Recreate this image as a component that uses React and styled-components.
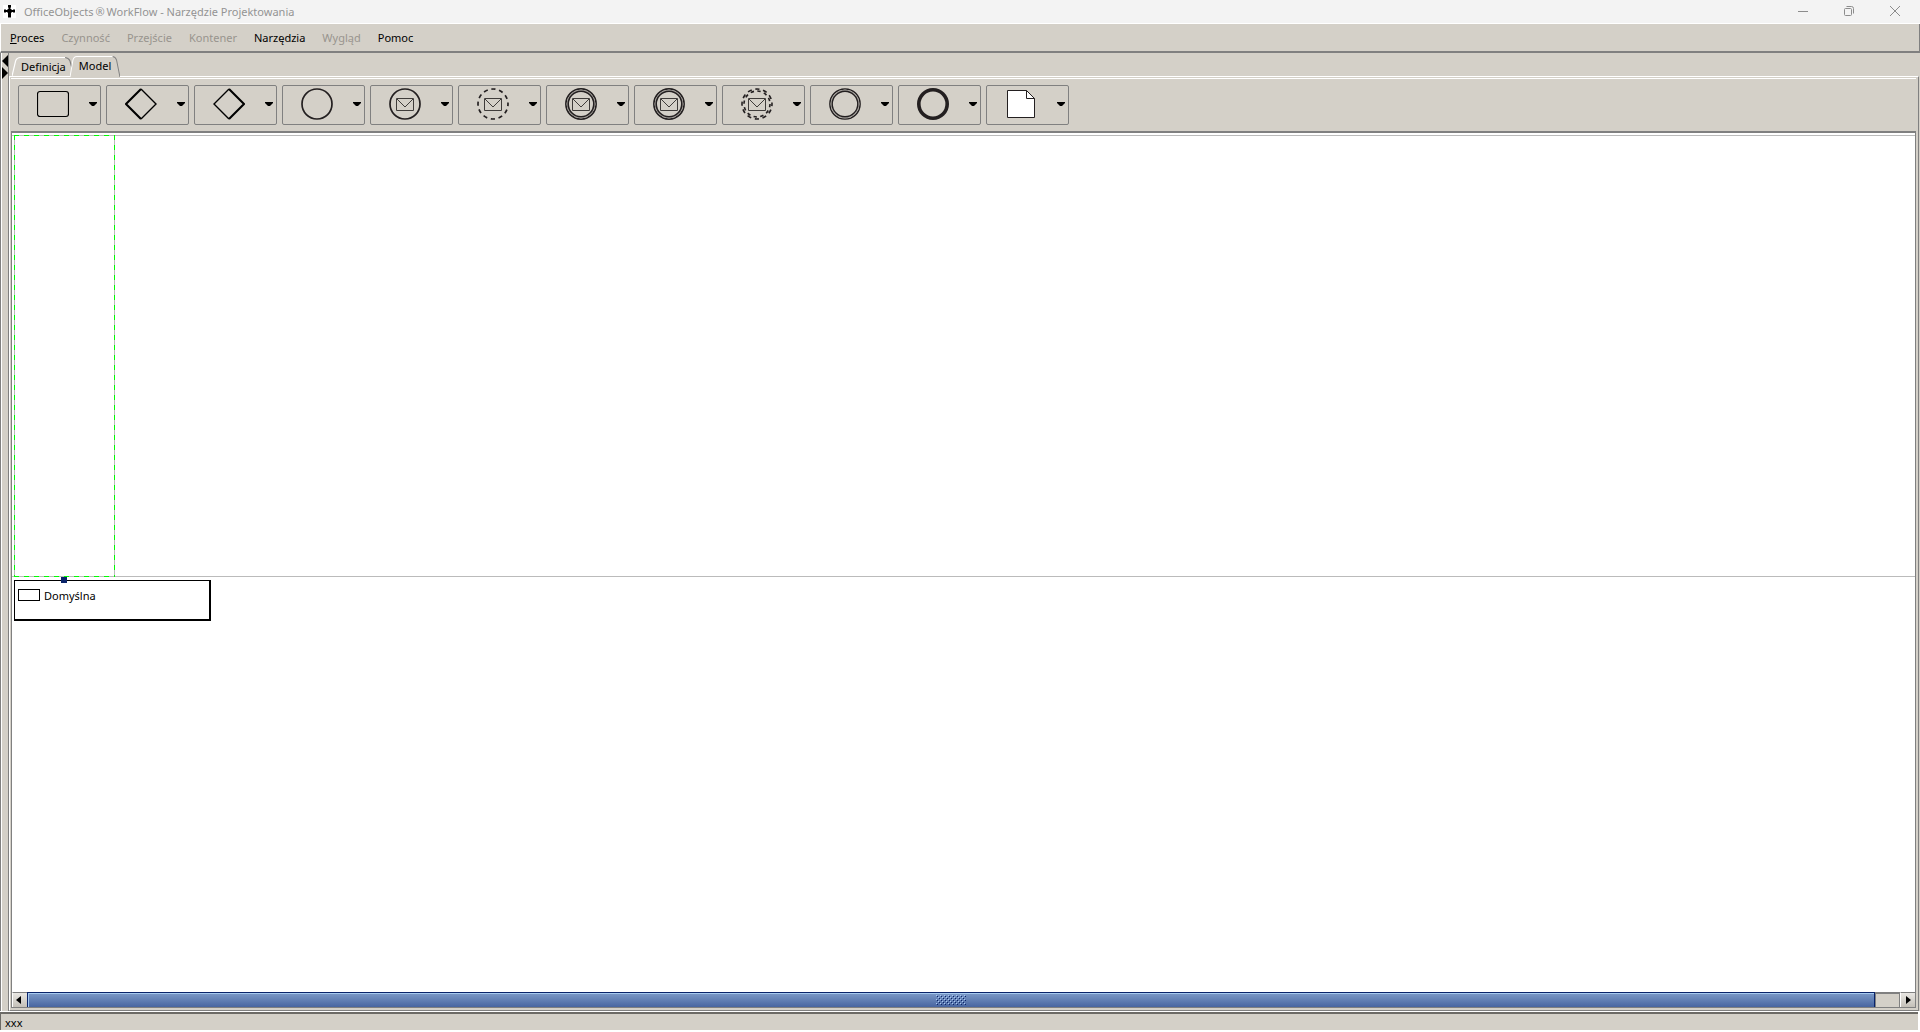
import { useState } from 'react'
import styled, { createGlobalStyle } from 'styled-components'

const INK = '#231f20'

const MENU = [
	{ label: 'Proces', mnemonic: true },
	{ label: 'Czynność', disabled: true },
	{ label: 'Przejście', disabled: true },
	{ label: 'Kontener', disabled: true },
	{ label: 'Narzędzia' },
	{ label: 'Wygląd', disabled: true },
	{ label: 'Pomoc' },
]

const GlobalStyle = createGlobalStyle`
	* {
		box-sizing: border-box;
	}
	html, body, #root {
		height: 100%;
	}
	body {
		margin: 0;
		background: #d4d0c8;
		font-family: 'Noto Sans', 'Open Sans', sans-serif;
		font-size: 11px;
		color: #000;
	}
	button {
		margin: 0;
		padding: 0;
		border: 0;
		background: none;
		font: inherit;
		color: inherit;
	}
	svg {
		display: block;
	}
`

const Window = styled.div`
	display: flex;
	flex-direction: column;
	height: 100vh;
	overflow: hidden;
`

const TitleBar = styled.header`
	display: flex;
	align-items: center;
	height: 24px;
	padding: 0 2px 1px 3px;
	background: #f3f3f3;
	border-bottom: 1px solid #fff;
`

const AppIcon = styled.svg`
	width: 13px;
	height: 13px;
	margin-right: 8px;
	background: #fff;
`

const Title = styled.h1`
	flex: 1;
	margin: 0;
	font-size: 11px;
	font-weight: 400;
	color: #949494;
`

const Mark = styled.span`
	padding: 0 2px;
`

const WindowButton = styled.button`
	display: flex;
	align-items: center;
	justify-content: center;
	width: 46px;
	height: 20px;

	svg {
		fill: none;
		stroke: #8c8c8c;
	}
`

const MenuBar = styled.nav`
	display: flex;
	align-items: center;
	gap: 17px;
	height: 29px;
	padding: 0 9px;
	border-bottom: 2px solid #808080;
	border-left: 1px solid #fff;
	border-right: 1px solid #808080;
`

const MenuItem = styled.button`
	&:disabled {
		color: #98948e;
	}
`

const Workspace = styled.div`
	display: flex;
	flex: 1;
	min-height: 0;
	border-left: 1px solid #808080;
`

const Divider = styled.div`
	width: 8px;
	padding-top: 2px;
	border-left: 1px solid #fff;
	border-right: 1px solid #808080;
`

const Collapse = styled.button`
	display: block;
	width: 6px;
	height: 12px;
`

const Main = styled.main`
	display: flex;
	flex: 1;
	flex-direction: column;
	min-width: 0;
	padding-right: 1px;
`

const Tabs = styled.div`
	display: flex;
	align-items: flex-end;
	height: 23px;
	padding-left: 3px;
`

const Tab = styled.button`
	position: relative;
	isolation: isolate;
	z-index: ${({ $active }) => ($active ? 1 : 0)};
	height: ${({ $active }) => ($active ? '21px' : '19px')};
	padding: ${({ $active }) => ($active ? '0 9px 2px' : '0 9px')};
	margin-right: -5px;
	margin-bottom: ${({ $active }) => ($active ? '-1px' : 0)};
	line-height: 18px;
	white-space: nowrap;
`

const TabShape = styled.svg`
	position: absolute;
	inset: 0;
	z-index: -1;
	width: 100%;
	height: 100%;
	fill: none;
`

const TabPanel = styled.div`
	display: flex;
	flex: 1;
	flex-direction: column;
	min-height: 0;
	padding: 1px 2px 2px 1px;
	border: 1px solid #fff;
	border-right-color: #808080;
	border-bottom-color: #808080;
`

const Toolbar = styled.div`
	display: flex;
	gap: 5px;
	height: 53px;
	padding: 6px 7px;
	border-top: 1px solid #fff;
`

const Tool = styled.button`
	display: flex;
	align-items: center;
	gap: 20px;
	width: 83px;
	height: 40px;
	padding: 0 0 2px 18px;
	border: 1px solid #808080;
	border-radius: 2px;
`

const Canvas = styled.section`
	flex: 1;
	min-height: 0;
	padding-top: 2px;
	background: #fff;
	border: 1px solid #808080;
	border-top-width: 2px;
	border-bottom: 0;
`

const Lane = styled.div`
	height: 442px;
	padding-left: 2px;
	border-top: 1px solid #bbb;
	border-bottom: 1px solid #bbb;
`

// selection frame: green dashes over the grey outline
const dash = dir => `repeating-linear-gradient(${dir}, #0f0 0 5px, #bbb 5px 10px)`

const LaneHeader = styled.div`
	width: 101px;
	height: 442px;
	margin-top: -1px;
	background-image: ${dash('to right')}, ${dash('to right')},
		${dash('to bottom')}, ${dash('to bottom')};
	background-size: 100% 1px, 100% 1px, 1px 100%, 1px 100%;
	background-position: top, bottom, left, right;
	background-repeat: no-repeat;
`

const Legend = styled.div`
	position: relative;
	display: flex;
	gap: 4px;
	width: 197px;
	height: 41px;
	margin: 3px 0 0 2px;
	padding: 8px 3px;
	border: solid #000;
	border-width: 1px 2px 2px 1px;
	line-height: 14px;
`

const Handle = styled.span`
	position: absolute;
	top: -4px;
	left: 46px;
	width: 6px;
	height: 6px;
	background: #0a246a;
`

const Swatch = styled.span`
	width: 22px;
	height: 12px;
	border: 1px solid #000;
`

const ScrollBar = styled.div`
	display: flex;
	height: 16px;
	border: 1px solid #808080;
	border-top: 0;
`

const ScrollButton = styled.button`
	display: flex;
	align-items: center;
	justify-content: center;
	width: 15px;
	padding-right: ${({ $left }) => ($left ? '3px' : 0)};
	border-top: 1px solid #808080;
	border-left: 1px solid #fff;
	background: linear-gradient(#e8e6e2, #c4c0b8);
`

const Thumb = styled.div`
	display: flex;
	flex: 1;
	align-items: center;
	justify-content: center;
	border: 1px solid #0a246a;
	border-bottom: 0;
	box-shadow: inset 1px 1px #a6caf0;
	background: linear-gradient(#7c9ac8, #4865a0);
`

const Track = styled.div`
	width: 25px;
	border: 1px solid #808080;
	border-width: 2px 1px 0;
`

const StatusBar = styled.footer`
	height: 21px;
	padding: 1px 0 0 5px;
	border: solid #fff;
	border-width: 1px 2px 2px 0;
	box-shadow: inset 1px 2px #6c6a66;
	line-height: 20px;
`

const Envelope = () => (
	<g fill="none" stroke="#3f3c3a" strokeWidth="1">
		<path d="M7.5 10.5h17v12h-17z" />
		<path d="M8 11l8 8l8-8" />
	</g>
)

const Ring = ({ r = 15, width = 1.7, dashes, offset }) => (
	<circle
		cx="16"
		cy="16"
		r={r}
		fill="none"
		stroke={INK}
		strokeWidth={width}
		strokeDasharray={dashes}
		strokeDashoffset={offset}
	/>
)

const DoubleRing = ({ light }) => (
	<>
		<Ring r={15.1} width={light ? 1.5 : 1.7} />
		<circle cx="16" cy="16" r="14" fill="none" stroke="#a19d98" strokeWidth="1" />
		<Ring r={12.8} width={light ? 1.4 : 1.6} />
	</>
)

const TOOLS = [
	{
		name: 'Czynność',
		icon: (
			<rect x="0.5" y="3.5" width="31" height="25" rx="2.5" fill="none" stroke="#000" strokeWidth="1.2" />
		),
	},
	{
		name: 'Rozgałęzienie',
		icon: (
			<g fill="none" stroke="#000">
				<path d="M16 1l15 15l-15 15" strokeWidth="1.4" />
				<path d="M16 1L1 16l15 15" strokeWidth="2.1" />
			</g>
		),
	},
	{
		name: 'Złączenie',
		icon: (
			<g fill="none" stroke="#000">
				<path d="M16 1L1 16l15 15" strokeWidth="1.4" />
				<path d="M16 1l15 15l-15 15" strokeWidth="2.1" />
			</g>
		),
	},
	{ name: 'Początek', icon: <Ring /> },
	{
		name: 'Komunikat początkowy',
		icon: (
			<>
				<Ring />
				<Envelope />
			</>
		),
	},
	{
		name: 'Komunikat nieprzerywający',
		icon: (
			<>
				<Ring dashes="4.2 3.65" offset="2.1" />
				<Envelope />
			</>
		),
	},
	{
		name: 'Komunikat pośredni',
		icon: (
			<>
				<DoubleRing />
				<Envelope />
			</>
		),
	},
	{
		name: 'Komunikat graniczny',
		icon: (
			<>
				<DoubleRing />
				<Envelope />
			</>
		),
	},
	{
		name: 'Komunikat graniczny nieprzerywający',
		icon: (
			<>
				<Ring r={15} width={1.6} dashes="4.2 3.65" offset="2.1" />
				<Ring r={13} width={1.6} dashes="3.4 3.4" offset="0" />
				<Envelope />
			</>
		),
	},
	{ name: 'Zdarzenie pośrednie', icon: <DoubleRing light /> },
	{ name: 'Koniec', icon: <Ring r={14.2} width={3.6} /> },
	{
		name: 'Notatka',
		icon: (
			<g fill="#fff" stroke={INK} strokeWidth="1">
				<path d="M2.5 2.5h19l8 8v19h-27z" />
				<path d="M21.5 2.5v8h8z" />
			</g>
		),
	},
]

function App() {
	const [tab, setTab] = useState('Model')

	return (
		<Window>
			<GlobalStyle />
			<TitleBar>
				<AppIcon viewBox="0 0 13 13">
					<path d="M5.500 1h2v11h-2zM1 5h11v2H1z" />
					<path d="M5 0h3v2.500h-3zM1 4.500h2v3h-2zM10 4.500h2v3h-2zM4.500 4h4v4h-4zM5 8h3v4.500h-3z" />
				</AppIcon>
				<Title>
					OfficeObjects<Mark>®</Mark>WorkFlow - Narzędzie Projektowania
				</Title>
				<WindowButton aria-label="Minimalizuj">
					<svg width="10" height="10" viewBox="0 0 10 10">
						<path d="M0 5.500h10" />
					</svg>
				</WindowButton>
				<WindowButton aria-label="Przywróć">
					<svg width="10" height="10" viewBox="0 0 10 10">
						<rect x="0.5" y="2.5" width="7" height="7" rx="1" />
						<path d="M2.500 .5h5a2 2 0 0 1 2 2v5" />
					</svg>
				</WindowButton>
				<WindowButton aria-label="Zamknij">
					<svg width="10" height="10" viewBox="0 0 10 10">
						<path d="M0 0l10 10M10 0L0 10" />
					</svg>
				</WindowButton>
			</TitleBar>

			<MenuBar>
				{MENU.map(({ label, disabled, mnemonic }) => (
					<MenuItem key={label} disabled={disabled}>
						{mnemonic ? (
							<>
								<u>{label[0]}</u>
								{label.slice(1)}
							</>
						) : (
							label
						)}
					</MenuItem>
				))}
			</MenuBar>

			<Workspace>
				<Divider>
					<Collapse aria-label="Zwiń panel">
						<svg width="6" height="12" viewBox="0 0 6 12">
							<path d="M6 0v12L0 6z" />
						</svg>
					</Collapse>
					<Collapse aria-label="Rozwiń panel">
						<svg width="6" height="12" viewBox="0 0 6 12">
							<path d="M0 0v12l6-6z" />
						</svg>
					</Collapse>
				</Divider>
				<Main>
					<Tabs>
						{['Definicja', 'Model'].map(name => (
							<Tab key={name} $active={tab === name} onClick={() => setTab(name)}>
								<TabShape viewBox="0 0 52 20" preserveAspectRatio="none">
									<path d="M0 20L3 4Q4 .5 7 .5H44Q47 1 48 4L51.500 20z" fill="#d4d0c8" />
									<path d="M0 20L3 4Q4 .5 7 .5H44" stroke="#fff" />
									<path d="M44 .5Q47 1 48 4L51.500 20" stroke="#808080" />
								</TabShape>
								{name}
							</Tab>
						))}
					</Tabs>
					<TabPanel>
						<Toolbar>
							{TOOLS.map(({ name, icon }) => (
								<Tool key={name} aria-label={name}>
									<svg width="32" height="32" viewBox="0 0 32 32">
										{icon}
									</svg>
									<svg width="8" height="4" viewBox="0 0 8 4">
										<path d="M0 0h8v1L5 4H3L0 1z" />
									</svg>
								</Tool>
							))}
						</Toolbar>
						<Canvas>
							<Lane>
								<LaneHeader />
							</Lane>
							<Legend>
								<Handle />
								<Swatch />
								Domyślna
							</Legend>
						</Canvas>
						<ScrollBar>
							<ScrollButton $left aria-label="Przewiń w lewo">
								<svg width="5" height="8" viewBox="0 0 5 8">
									<path d="M5 0v8L0 4z" />
								</svg>
							</ScrollButton>
							<Thumb>
								<svg width="30" height="10">
									<defs>
										<pattern id="grip" width="4" height="4" patternUnits="userSpaceOnUse">
											<path d="M0 0h1v1H0zM2 2h1v1H2z" fill="#a9c9f5" />
											<path d="M1 1h1v1H1zM3 3h1v1H3z" fill="#0a246a" />
										</pattern>
									</defs>
									<rect width="30" height="10" fill="url(#grip)" />
								</svg>
							</Thumb>
							<Track />
							<ScrollButton aria-label="Przewiń w prawo">
								<svg width="5" height="8" viewBox="0 0 5 8">
									<path d="M0 0v8l5-4z" />
								</svg>
							</ScrollButton>
						</ScrollBar>
					</TabPanel>
				</Main>
			</Workspace>

			<StatusBar>xxx</StatusBar>
		</Window>
	)
}
export default App
